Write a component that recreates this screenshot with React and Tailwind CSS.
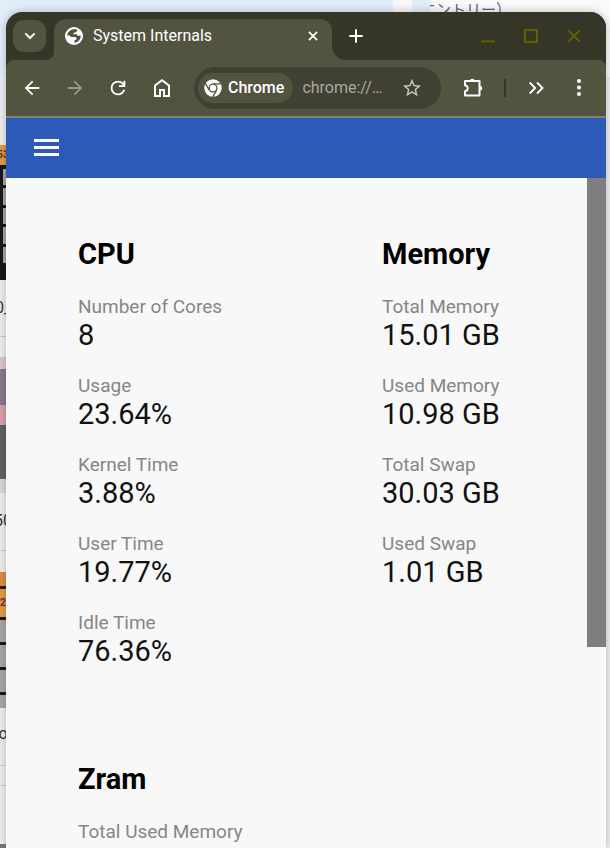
import React from 'react';
import { MdStarBorder } from 'react-icons/md';

const cpu = [
  { label: 'Number of Cores', value: '8' },
  { label: 'Usage', value: '23.64%' },
  { label: 'Kernel Time', value: '3.88%' },
  { label: 'User Time', value: '19.77%' },
  { label: 'Idle Time', value: '76.36%' },
];

const memory = [
  { label: 'Total Memory', value: '15.01 GB' },
  { label: 'Used Memory', value: '10.98 GB' },
  { label: 'Total Swap', value: '30.03 GB' },
  { label: 'Used Swap', value: '1.01 GB' },
];

const zram = [{ label: 'Total Used Memory', value: '' }];

function Icon({ d, className = 'size-[22px]' }) {
  return (
    <svg viewBox="0 0 24 24" fill="currentColor" className={className} aria-hidden="true">
      <path d={d} />
    </svg>
  );
}

function StrokeIcon({ d, className, width = 2 }) {
  return (
    <svg viewBox="0 0 24 24" fill="none" stroke="currentColor" strokeWidth={width} className={className} aria-hidden="true">
      <path d={d} />
    </svg>
  );
}

function GlobeIcon() {
  return (
    <svg viewBox="0 0 18 18" className="size-[18px] shrink-0" aria-hidden="true">
      <circle cx="9" cy="9" r="9" fill="#fff" />
      <path
        d="M8.500 2.200h3.700c0 1.800-.6 2.900-2.200 3.200-1.200.2-1.800.8-1.800 1.800h2.700c1 0 1.500.7 1.600 1.600h3.300c.1 3.400-2.400 6.500-6.300 7v-2.600c1.300 0 2-.7 2-1.700 0-1.200-.9-1.500-2.500-1.500H6.500C5.500 10 5 9.400 5 8.600H2.200C2.200 5.500 4.900 2.600 8.500 2.200Z"
        fill="#53543f"
      />
    </svg>
  );
}

function ChromeIcon() {
  return (
    <svg viewBox="0 0 18 18" className="size-[18px] shrink-0" aria-hidden="true">
      <circle cx="9" cy="9" r="8.7" fill="#fff" />
      <circle cx="9" cy="9" r="4.5" fill="#53543f" />
      <path d="M9 4.800h8M5.300 11.200 1.300 4.300M12.700 11.200 8.700 18" stroke="#53543f" strokeWidth="1.3" fill="none" />
      <circle cx="9" cy="9" r="3.2" fill="#fff" />
    </svg>
  );
}

function PuzzleIcon() {
  return (
    <svg viewBox="0 0 22 22" className="size-[22px]" aria-hidden="true">
      <path
        d="M3 4h14.500v14.500H3v-4.200c3.600-.6 3.600-5.500 0-6.100Z"
        fill="none"
        stroke="currentColor"
        strokeWidth="2"
        strokeLinejoin="round"
      />
      <path d="M8 4a2.300 2.300 0 0 1 4.600 0ZM18 9a2.300 2.300 0 0 1 0 4.600Z" fill="currentColor" />
    </svg>
  );
}

function DotsIcon() {
  return (
    <svg viewBox="0 0 22 22" fill="currentColor" className="size-[22px]" aria-hidden="true">
      <circle cx="11" cy="4" r="2" />
      <circle cx="11" cy="10.500" r="2" />
      <circle cx="11" cy="17" r="2" />
    </svg>
  );
}

// Keyboard photo, only its right edge shows beside the window
function Keys() {
  return (
    <div className="flex h-[115px] shrink-0 flex-col gap-[3px] bg-[#1d1716] pt-1 pb-[17px] pl-[3px]">
      {Array.from({ length: 5 }, (_, i) => (
        <div key={i} className="flex-1 bg-[#aaa6a4]" />
      ))}
    </div>
  );
}

function Desktop() {
  return (
    <div className="flex flex-col overflow-hidden bg-[#eeeef1] text-[#30343b] [grid-area:1/1]" aria-hidden="true">
      <div className="flex h-[77px] shrink-0 bg-[#e1edf9]">
        <div className="w-[393px] shrink-0" />
        <div className="w-[19px] shrink-0 bg-[#f7f7fa]" />
        <div className="w-[18px] shrink-0" />
        <div className="flex-1 bg-[#f9f9fa]">
          <div className="flex w-[81px] justify-end overflow-hidden text-[15px] leading-5 whitespace-nowrap text-[#52677a]">
            エントリー）
          </div>
        </div>
      </div>
      <div className="flex w-[6px] flex-1 flex-col overflow-hidden">
        <div className="h-[68px] shrink-0" />
        <div className="flex h-5 shrink-0 justify-center bg-[#e39a48] text-[11px] leading-5 font-bold text-[#613b2c]">53</div>
        <Keys />
        <div className="flex h-[57px] shrink-0 justify-center border-b border-[#ccccd0] text-base leading-[56px]">0_</div>
        <div className="h-5 shrink-0" />
        <div className="h-3 shrink-0 bg-[#ddc5d1]" />
        <div className="h-9 shrink-0 bg-[#8b7890]" />
        <div className="h-5 shrink-0 bg-[#d9a0a8]" />
        <div className="h-[54px] shrink-0 bg-[#606263]" />
        <div className="h-[14px] shrink-0 bg-[#d9dad5]" />
        <div className="flex h-[58px] shrink-0 justify-center border-b border-[#ccccd0] text-base leading-[56px]">50</div>
        <div className="h-[21px] shrink-0" />
        <div className="h-[14px] shrink-0 bg-[#d98f3f]" />
        <div className="h-[3px] shrink-0 bg-[#221c1a]" />
        <div className="flex h-7 shrink-0 justify-center bg-[#e39a48] text-[11px] leading-7 font-bold text-[#613b2c]">2</div>
        <div className="flex h-[91px] shrink-0 flex-col gap-[3px] bg-[#1d1716] pt-[3px]">
          <div className="flex-1 bg-[#aaa6a4]" />
          <div className="flex-1 bg-[#aaa6a4]" />
          <div className="flex-1 bg-[#aaa6a4]" />
          <div className="h-[13px] bg-[#aaa6a4]" />
        </div>
        <div className="flex h-[58px] shrink-0 justify-center border-b border-[#ccccd0] text-base leading-[52px]">o</div>
        <div className="h-5 shrink-0 border-b border-[#ccccd0]" />
        <div className="h-[58px] shrink-0" />
        <div className="flex-1 bg-[#777777]" />
      </div>
    </div>
  );
}

function TabStrip() {
  return (
    <div className="flex h-12 shrink-0 bg-[#353528] pl-[7px]">
      <button aria-label="Search tabs" className="mt-2 flex h-8 w-[33px] shrink-0 items-center justify-center rounded-[11px] bg-[#53543f]">
        <StrokeIcon d="m5 8 7 7 7-7" width={3} className="size-4" />
      </button>
      <div className="flex w-2 shrink-0 items-end bg-[#53543f]">
        <div className="h-full w-full rounded-br-xl bg-[#353528]" />
      </div>
      <div className="w-[278px] shrink-0 bg-[linear-gradient(#353528_50%,#53543f_50%)]">
        <div className="mt-[7px] flex h-[41px] items-center rounded-t-xl bg-[#53543f] pr-3 pb-2 pl-[11px]">
          <GlobeIcon />
          <span className="ml-[10px] flex-1 text-base">System Internals</span>
          <button aria-label="Close tab">
            <StrokeIcon d="m5 5 14 14M19 5 5 19" width={3} className="size-[14px]" />
          </button>
        </div>
      </div>
      <div className="flex flex-1 bg-[#53543f]">
        <div className="flex flex-1 items-center rounded-bl-[14px] bg-[#353528] pr-6 pl-4">
          <button aria-label="New tab">
            <StrokeIcon d="M12 2v20M2 12h20" width={3} className="size-4" />
          </button>
          <div className="ml-auto flex gap-[27px] text-[#606000]">
            <button aria-label="Minimize">
              <StrokeIcon d="M2 20h20" width={3} className="size-4" />
            </button>
            <button aria-label="Maximize">
              <StrokeIcon d="M3 3h18v18H3z" width={3} className="size-4" />
            </button>
            <button aria-label="Close window">
              <StrokeIcon d="m3 3 18 18M21 3 3 21" width={3} className="size-4" />
            </button>
          </div>
        </div>
      </div>
    </div>
  );
}

function Toolbar() {
  return (
    <div className="bg-[#353528]">
      <div className="flex h-[58px] items-center rounded-t-lg border-b-2 border-[#808169] bg-[#53543f] pr-4 pl-[15px]">
        <div className="flex items-center gap-[21px]">
          <button aria-label="Back">
            <Icon d="m7.825 13 5.600 5.600L12 20l-8-8 8-8 1.425 1.400-5.600 5.600H20v2H7.825Z" />
          </button>
          <button aria-label="Forward" className="text-[#98998c]">
            <Icon d="M16.175 13H4v-2h12.175l-5.600-5.600L12 4l8 8-8 8-1.425-1.400 5.600-5.600Z" />
          </button>
          <button aria-label="Reload">
            <Icon d="M12 20q-3.350 0-5.675-2.325T4 12t2.325-5.675T12 4q1.725 0 3.300.713T18 6.750V4h2v7h-7V9h4.200q-.8-1.400-2.187-2.200T12 6Q9.500 6 7.750 7.750T6 12t1.750 4.250T12 18q1.925 0 3.475-1.100T17.650 14h2.100q-.7 2.650-2.850 4.325T12 20Z" />
          </button>
          <button aria-label="Home">
            <Icon className="size-6" d="M6 19h3v-6h6v6h3v-9l-6-4.500L6 10v9Zm-2 2V9l8-6 8 6v12h-7v-6h-2v6H4Z" />
          </button>
        </div>
        <div className="ml-5 flex h-[42px] min-w-0 flex-1 items-center rounded-full bg-[#404033] pr-[18px] pl-1">
          <button className="flex h-[30px] items-center gap-[6px] rounded-full bg-[#53543f] pr-[9px] pl-[6px] text-base font-medium">
            <ChromeIcon />
            Chrome
          </button>
          <input
            aria-label="Address"
            defaultValue="chrome://sys-internals"
            className="ml-[9px] w-[84px] min-w-0 flex-1 text-base text-ellipsis text-[#a9aaa2] outline-none"
          />
          <button aria-label="Bookmark" className="ml-[14px] text-[#c5c5bf]">
            <MdStarBorder className="size-[22px]" />
          </button>
        </div>
        <div className="ml-[21px] flex items-center">
          <button aria-label="Extensions">
            <PuzzleIcon />
          </button>
          <div className="mx-5 h-[18px] w-[2px] bg-[#353528]" />
          <button aria-label="More items">
            <StrokeIcon d="m4 6 6 6-6 6M12 6l6 6-6 6" className="size-[22px]" />
          </button>
          <button aria-label="Menu" className="ml-5">
            <DotsIcon />
          </button>
        </div>
      </div>
    </div>
  );
}

function Section({ title, items }) {
  return (
    <section>
      <h2 className="mb-[25px] text-[29px] leading-8 font-bold text-black">{title}</h2>
      <dl className="flex flex-col gap-[23px]">
        {items.map((item) => (
          <div key={item.label}>
            <dt className="text-[19px] leading-6 text-[#868686]">{item.label}</dt>
            <dd className="text-[29px] leading-8 text-[#111]">{item.value}</dd>
          </div>
        ))}
      </dl>
    </section>
  );
}

export default function App() {
  return (
    <div className="grid h-screen grid-rows-1 overflow-hidden font-['Roboto','Noto_Sans_CJK_JP',sans-serif]">
      <Desktop />
      <div className="z-10 mt-3 mr-1 ml-[6px] flex min-h-0 flex-col overflow-hidden rounded-t-2xl text-white shadow-[0_0_8px_#00000040] [grid-area:1/1]">
        <TabStrip />
        <Toolbar />
        <header className="flex h-[60px] shrink-0 items-center bg-[#2d5ab7] px-7 pb-[2px]">
          <button aria-label="Open menu" className="flex w-[25px] flex-col gap-1">
            <span className="h-[3px] bg-white" />
            <span className="h-[3px] bg-white" />
            <span className="h-[3px] bg-white" />
          </button>
        </header>
        <div className="flex min-h-0 flex-1 bg-[#f8f8f8]">
          <main className="grid flex-1 grid-cols-[304px_1fr] content-start gap-y-24 overflow-hidden pt-[60px] pl-[72px]">
            <Section title="CPU" items={cpu} />
            <Section title="Memory" items={memory} />
            <Section title="Zram" items={zram} />
          </main>
          <div className="h-[70%] w-[19px] bg-[#7e7e7e]" />
        </div>
      </div>
    </div>
  );
}
